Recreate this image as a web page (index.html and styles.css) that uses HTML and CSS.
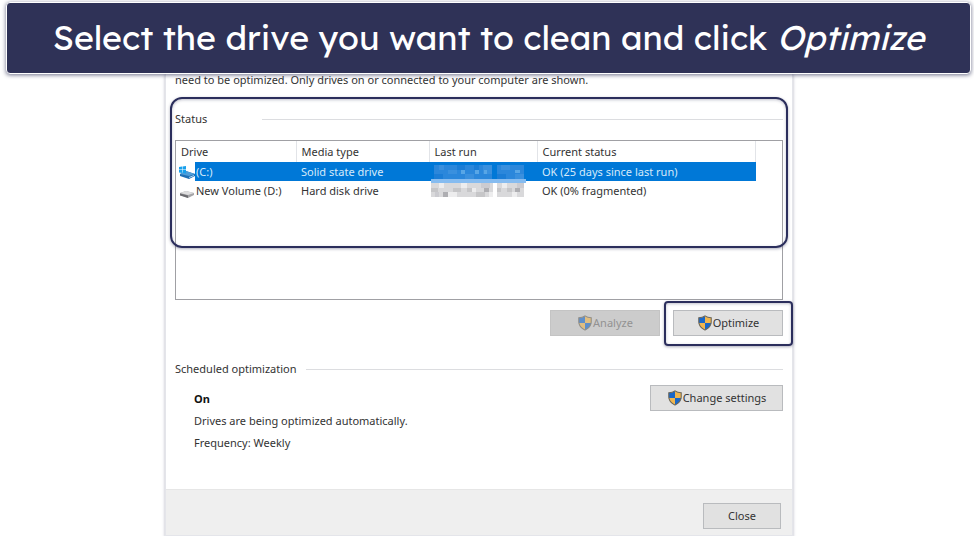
FILE: index.html
```html
<!DOCTYPE html>
<html lang="en">
<head>
    <meta charset="UTF-8">
    <meta name="viewport" content="width=device-width, initial-scale=1.0">
    <title>Optimize Drives</title>
    <link rel="stylesheet" href="styles.css">
</head>
<body>

    <!-- Shared icons -->
    <svg class="sprite" aria-hidden="true">
        <symbol id="shield" viewBox="0 0 16 18">
            <path d="M8 1C6 2.500 3.500 3 1 3v5c0 4 3 7 7 9z" fill="#1967c8"/>
            <path d="M8 1c2 1.500 4.500 2 7 2v5c0 4-3 7-7 9z" fill="#f0b64e"/>
            <path d="M1 9h7v8C4.200 15.200 1.500 12.500 1 9z" fill="#f0b64e"/>
            <path d="M15 9H8v8c3.800-1.800 6.500-4.500 7-8z" fill="#1967c8"/>
            <path d="M8 1C6 2.500 3.500 3 1 3v5c0 4 3 7 7 9 4-2 7-5 7-9V3c-2.500 0-5-.5-7-2z" fill="none" stroke="#6b6659" stroke-width="1.200"/>
        </symbol>
    </svg>

    <header class="banner">
        <h1>Select the drive you want to clean and click <em>Optimize</em></h1>
    </header>

    <main class="stage">
        <div class="dialog">
            <div class="dialog-body">
                <p class="intro">need to be optimized. Only drives on or connected to your computer are shown.</p>

                <!-- Drive list -->
                <section class="status">
                    <h2 class="group-title status-title">Status</h2>
                    <div class="drive-list">
                        <table>
                            <colgroup>
                                <col class="col-drive">
                                <col class="col-media">
                                <col class="col-run">
                                <col class="col-status">
                            </colgroup>
                            <thead>
                                <tr>
                                    <th>Drive</th>
                                    <th>Media type</th>
                                    <th>Last run</th>
                                    <th>Current status</th>
                                </tr>
                            </thead>
                            <tbody>
                                <tr class="selected">
                                    <td class="drive">
                                        <svg class="drive-icon" viewBox="0 0 16 14" aria-hidden="true">
                                            <path d="M1 9l6-3 9 3v2l-6 3-9-3z" fill="#1f6fb5"/>
                                            <path d="M1 9l6-3 9 3-6 2z" fill="#4f9ed9"/>
                                            <path d="M10 12.500l5-2" stroke="#a9d4f2" stroke-width="1"/>
                                            <path d="M0 2l3-.5v3H0zM3.500 1.500L7 1v3.500H3.500zM0 5h3v3l-3-.5zM3.500 5H7v3.500L3.500 8z" fill="#19a0ec"/>
                                        </svg>
                                        <span>(C:)</span>
                                    </td>
                                    <td>Solid state drive</td>
                                    <td class="run">
                                        <svg class="redacted" viewBox="0 0 96 19" shape-rendering="crispEdges" aria-hidden="true">
                                            <path d="M3 3h58v14H3zM66 3h27v14H66z" fill="#2b87db"/>
                                            <path d="M8 3h5v5H8zM17 8h9v4h-9zM34 12h9v5h-9zM52 3h9v9h-9zM70 3h9v5h-9zM84 12h9v5h-9z" fill="#3a90de"/>
                                            <path d="M30 8h4v4h-4zM44 8h4v4h-4zM53 8h3v4h-3zM84 8h5v3h-5z" fill="#58a6e6"/>
                                            <path d="M3 12h9v5H3zM26 3h8v5h-8zM43 3h5v5h-5zM66 12h9v5h-9z" fill="#1b7dd6"/>
                                            <path d="M0 17h95v2H0z" fill="#86bcf0"/>
                                        </svg>
                                    </td>
                                    <td>OK (25 days since last run)</td>
                                </tr>
                                <tr>
                                    <td class="drive">
                                        <svg class="drive-icon" viewBox="0 0 16 14" aria-hidden="true">
                                            <path d="M1 9l6-2 8 2v2l-6 3-8-3z" fill="#a5a5a8"/>
                                            <path d="M1 9l6-2 8 2-6 2z" fill="#dededf"/>
                                            <path d="M1 9.500l8 2V14l-8-2.500z" fill="#6c6c70"/>
                                        </svg>
                                        <span>New Volume (D:)</span>
                                    </td>
                                    <td>Hard disk drive</td>
                                    <td class="run">
                                        <svg class="redacted" viewBox="0 0 96 19" shape-rendering="crispEdges" aria-hidden="true">
                                            <path d="M0 0h95v2H0z" fill="#86bcf0"/>
                                            <path d="M0 2h62v14H0zM66 2h27v14H66z" fill="#d9d9db"/>
                                            <path d="M0 7h7v4H0zM22 7h8v4h-8zM36 7h5v4h-5zM45 11h9v5h-9zM66 7h4v4h-4zM76 7h5v4h-5z" fill="#c6c6c8"/>
                                            <path d="M12 11h5v5h-5zM53 7h5v4h-5zM84 7h5v4h-5z" fill="#aeaeb2"/>
                                            <path d="M8 2h5v5H8zM17 11h9v5h-9zM30 2h6v5h-6zM41 7h4v4h-4zM58 11h4v5h-4zM71 2h5v5h-5zM81 11h5v5h-5z" fill="#ededee"/>
                                            <path d="M4 11h4v5H4zM50 2h9v5h-9zM86 2h7v5h-7z" fill="#cbcbd0"/>
                                        </svg>
                                    </td>
                                    <td>OK (0% fragmented)</td>
                                </tr>
                            </tbody>
                        </table>
                    </div>
                </section>

                <div class="actions">
                    <button type="button" class="btn" disabled><svg class="shield"><use href="#shield"/></svg>Analyze</button>
                    <div class="marked">
                        <button type="button" class="btn"><svg class="shield"><use href="#shield"/></svg>Optimize</button>
                    </div>
                </div>

                <!-- Schedule -->
                <section class="schedule">
                    <h2 class="group-title">Scheduled optimization</h2>
                    <div class="schedule-row">
                        <div class="schedule-info">
                            <p><strong>On</strong></p>
                            <p>Drives are being optimized automatically.</p>
                            <p>Frequency: Weekly</p>
                        </div>
                        <button type="button" class="btn btn-wide"><svg class="shield"><use href="#shield"/></svg>Change settings</button>
                    </div>
                </section>
            </div>

            <footer class="dialog-footer">
                <button type="button" class="btn btn-close">Close</button>
            </footer>
        </div>
    </main>

</body>
</html>
```
FILE: styles.css
```css
*,
*::before,
*::after {
    box-sizing: border-box;
}

body {
    margin: 0;
    background: #fff;
    color: #333;
    font-family: "Noto Sans", "Open Sans", sans-serif;
    font-size: 11px;
    line-height: 16px;
}

h1, h2, p {
    margin: 0;
    font-weight: normal;
}

.sprite {
    position: absolute;
    width: 0;
    height: 0;
}

/* Caption banner */
.banner {
    position: relative;
    z-index: 2;
    margin: 2px 3px 0 6px;
    padding: 12px 16px;
    border: 1px solid #fff;
    border-radius: 4px;
    background: #2f3257;
    box-shadow: 0 1px 4px rgba(47, 50, 87, 0.7);
    color: #fff;
    text-align: center;
}

.banner h1 {
    font-family: Lexend, "Open Sans", sans-serif;
    font-size: 34px;
    line-height: 46px;
    white-space: nowrap;
}

/* Dialog window, tucked under the banner */
.stage {
    margin-top: -2px;
    padding: 0 181px 0 165px;
}

.dialog {
    border: 1px solid #e4e5ea;
    border-top: 0;
    box-shadow: 0 2px 3px rgba(47, 50, 87, 0.35);
}

.dialog-body {
    padding: 0 9px;
}

.intro {
    padding-bottom: 9px;
}

.group-title {
    display: flex;
    align-items: center;
    gap: 9px;
    font-size: 11px;
    line-height: 16px;
}

.group-title::after {
    content: "";
    flex: 1;
    height: 1px;
    background: #dcdde0;
}

.status-title {
    gap: 55px;
}

/* Frame drawn around the part to look at */
.status,
.marked {
    position: relative;
}

.status::after,
.marked::after {
    content: "";
    position: absolute;
    border: 2px solid #2b2e5c;
    box-shadow: 0 1px 3px rgba(47, 50, 87, 0.4), inset 0 1px 3px rgba(47, 50, 87, 0.3);
    pointer-events: none;
}

.status {
    padding-top: 14px;
}

.status::after {
    top: 0;
    left: -5px;
    right: -5px;
    height: 151px;
    border-radius: 12px;
}

.marked::after {
    inset: -9px -10px -10px -9px;
    border-radius: 4px;
}

.drive-list {
    height: 160px;
    margin-top: 13px;
    border: 1px solid #a0a0a4;
}

table {
    width: 580px;
    max-width: 100%;
    border-collapse: collapse;
    table-layout: fixed;
}

.col-drive { width: 120px; }
.col-media { width: 133px; }
.col-run { width: 108px; }

th,
td {
    height: 19px;
    padding: 0 0 0 5px;
    font-weight: normal;
    text-align: left;
    white-space: nowrap;
}

th {
    height: 21px;
    border-right: 1px solid #e2e4e8;
}

.selected td {
    background: #0078d7;
    color: #d6eafa;
}

.drive {
    display: flex;
    align-items: center;
    padding-left: 3px;
}

.drive span {
    flex: 1;
    padding-left: 1px;
    line-height: 19px;
}

.selected .drive {
    background: none;
}

.selected .drive span {
    background: #0078d7;
}

.drive-icon {
    width: 16px;
    height: 14px;
}

td.run {
    padding-left: 2px;
}

.redacted {
    display: block;
    width: 96px;
    height: 19px;
}

/* Buttons */
.btn {
    display: flex;
    align-items: center;
    justify-content: center;
    width: 110px;
    height: 26px;
    padding: 0;
    border: 1px solid #b9bbbe;
    background: #e1e1e1;
    color: #333;
    font: inherit;
}

.btn:disabled {
    border-color: #c4c4c4;
    background: #ccc;
    color: #929292;
}

.btn:disabled .shield {
    opacity: 0.6;
}

.btn-wide {
    width: 133px;
}

.btn-close {
    width: 78px;
}

.shield {
    width: 16px;
    height: 16px;
}

.actions {
    display: flex;
    justify-content: flex-end;
    gap: 13px;
    padding-top: 10px;
}

/* Schedule */
.schedule {
    padding: 25px 0 38px;
}

.schedule-row {
    display: flex;
    justify-content: space-between;
    align-items: flex-start;
    padding-top: 8px;
}

.schedule-info {
    display: flex;
    flex-direction: column;
    gap: 6px;
    padding: 6px 0 0 19px;
}

strong {
    color: #111;
}

.dialog-footer {
    display: flex;
    justify-content: flex-end;
    padding: 13px 11px 6px;
    border-top: 1px solid #e6e6e6;
    background: #efefef;
}
```
